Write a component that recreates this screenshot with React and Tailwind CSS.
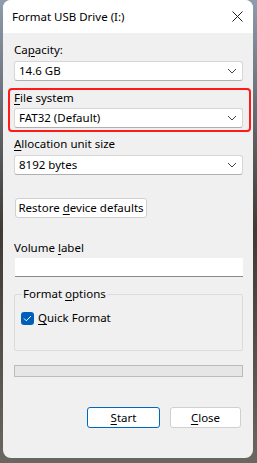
import React from 'react';

const font = { fontFamily: '"Noto Sans", "Open Sans", sans-serif' };

const Chevron = () => (
  <svg width="10" height="6" viewBox="0 0 10 6" className="shrink-0">
    <path d="M1 1 L5 5 L9 1" fill="none" stroke="#444" strokeWidth="1" />
  </svg>
);

const Select = ({ value }) => (
  <div className="h-[20px] bg-white border border-[#d6d6d6] border-b-[#b0b0b0] rounded-[3px] flex items-center justify-between pl-[4px] pr-[5px] text-[11.5px] text-black">
    <span>{value}</span>
    <Chevron />
  </div>
);

const Label = ({ children }) => (
  <div className="h-[16px] leading-[16px] text-[11.5px] text-black whitespace-nowrap">{children}</div>
);

const U = ({ children }) => <span className="underline underline-offset-2">{children}</span>;

export default function App() {
  return (
    <div className="w-[257px] h-[463px] bg-gradient-to-b from-[#8e9cae] via-[#3f3a35] to-[#6a6660] pl-[3px]" style={font}>
      <div className="w-[250px] h-[458px] rounded-[8px] overflow-hidden bg-[#f0f0f0] flex flex-col">
        <div className="h-[33px] bg-white flex items-center justify-between pl-[9px] pr-[10px] shrink-0">
          <span className="text-[11.5px] text-black whitespace-nowrap">Format USB Drive (I:)</span>
          <svg width="11" height="11" viewBox="0 0 11 11">
            <path d="M0.5 0.5 L10.5 10.5 M10.5 0.5 L0.5 10.5" stroke="#222" strokeWidth="1" />
          </svg>
        </div>

        <div className="flex flex-col pl-[11px] pr-[10px]">
          <div className="mt-[9px]"><Label>Ca<U>p</U>acity:</Label></div>
          <div className="mt-[3px]"><Select value="14.6 GB" /></div>

          <div className="mt-[7px] -ml-[6px] -mr-[8px] border-2 border-[#ff1a1a] rounded-[4px] pl-[4px] pr-[6px] pb-[2px]">
            <Label><U>F</U>ile system</Label>
            <div className="mt-[2px]"><Select value="FAT32 (Default)" /></div>
          </div>

          <div className="mt-[4px]"><Label><U>A</U>llocation unit size</Label></div>
          <div className="mt-[3px]"><Select value="8192 bytes" /></div>

          <div className="mt-[23px] ml-[1px] w-[132px] h-[20px] bg-white border border-[#d0d0d0] rounded-[3px] flex items-center justify-center text-[11.5px] text-black whitespace-nowrap">
            <span>Restore <U>d</U>evice defaults</span>
          </div>

          <div className="mt-[22px]"><Label>Volume <U>l</U>abel</Label></div>
          <div className="mt-[2px] ml-[1px] h-[19px] bg-white border-b border-[#8a8a8a]" />

          <div className="mt-[17px] relative h-[57px] border border-[#dcdcdc] rounded-[2px]">
            <span className="absolute -top-[9px] left-[7px] px-[1px] bg-[#f0f0f0] text-[11.5px] leading-[16px] text-black whitespace-nowrap">
              Format <U>o</U>ptions
            </span>
            <div className="flex items-center mt-[15px] ml-[6px] gap-[4px]">
              <div className="w-[13px] h-[13px] rounded-[3px] bg-[#005fb8] flex items-center justify-center">
                <svg width="9" height="7" viewBox="0 0 9 7">
                  <path d="M1 3.5 L3.3 5.8 L8 1" fill="none" stroke="white" strokeWidth="1" />
                </svg>
              </div>
              <span className="text-[11.5px] leading-[16px] text-black whitespace-nowrap"><U>Q</U>uick Format</span>
            </div>
          </div>

          <div className="mt-[14px] h-[12px] bg-[#e6e6e6] border border-[#bcbcbc]" />

          <div className="mt-[30px] flex justify-end gap-[10px] pr-[2px]">
            <div className="w-[73px] h-[21px] bg-white border border-[#0067c0] rounded-[3px] flex items-center justify-center text-[11.5px] text-black">
              <span><U>S</U>tart</span>
            </div>
            <div className="w-[71px] h-[21px] bg-white border border-[#d0d0d0] rounded-[3px] flex items-center justify-center text-[11.5px] text-black">
              <span><U>C</U>lose</span>
            </div>
          </div>
        </div>
      </div>
    </div>
  );
}
